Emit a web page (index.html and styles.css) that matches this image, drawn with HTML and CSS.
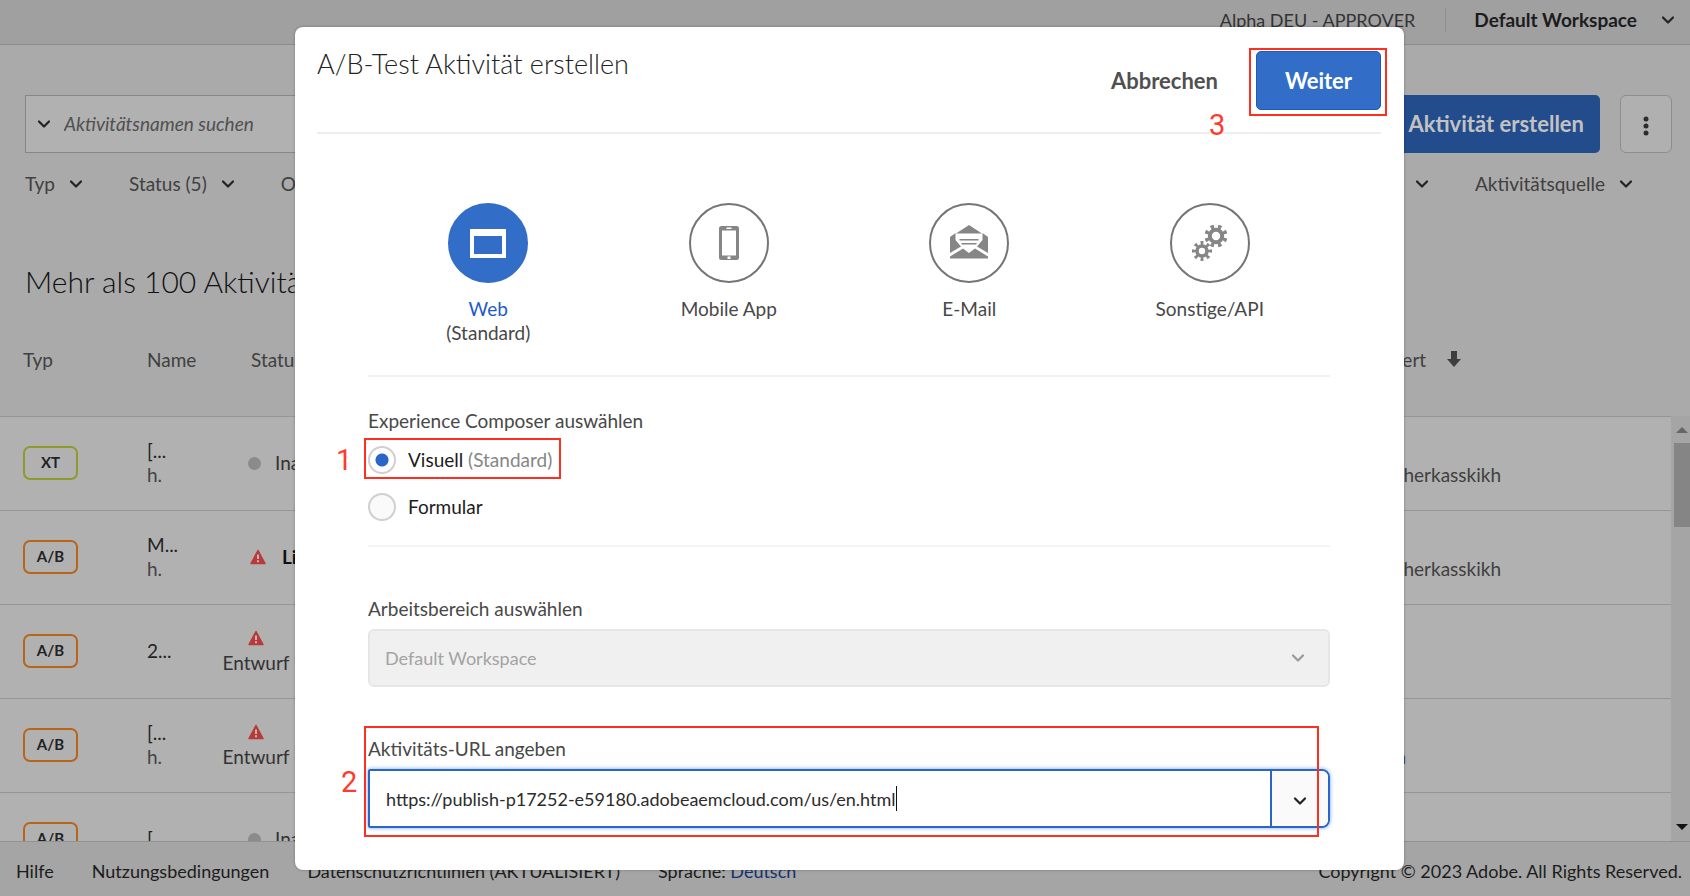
FILE: index.html
```
<!DOCTYPE html>
<html lang="de">
<head>
<meta charset="utf-8">
<title>A/B-Test Aktivität erstellen</title>
<link rel="stylesheet" href="styles.css">
</head>
<body>
<svg width="0" height="0" class="defs" aria-hidden="true">
  <symbol id="chevron" viewBox="0 0 14 10"><path d="M2 2.500l5 5 5-5" fill="none" stroke="currentColor" stroke-width="2.200" stroke-linecap="round" stroke-linejoin="round"/></symbol>
  <symbol id="warning" viewBox="0 0 16 16"><path d="M8 1.500L15 14.500H1z" fill="#b83a3a" stroke="#b83a3a" stroke-width="1.500" stroke-linejoin="round"/><path d="M8 5.500v4.500M8 11.300v1.900" stroke="#c4b4b4" stroke-width="2"/></symbol>
</svg>
<div class="page">
  <header class="topbar">
    <span class="user">Alpha DEU - APPROVER</span>
    <button class="workspace">Default Workspace <svg class="chev"><use href="#chevron"/></svg></button>
  </header>
  <main class="content">
    <div class="toolbar">
      <label class="search"><svg class="chev"><use href="#chevron"/></svg><input type="text" placeholder="Aktivitätsnamen suchen" aria-label="Aktivitätsnamen suchen"></label>
      <button class="create">Aktivität erstellen</button>
      <button class="more" aria-label="Mehr"><svg width="6" height="20" viewBox="0 0 6 20"><g fill="#2c2c2c"><circle cx="3" cy="3" r="2.500"/><circle cx="3" cy="10" r="2.500"/><circle cx="3" cy="17" r="2.500"/></g></svg></button>
    </div>
    <div class="filters">
      <button>Typ <svg class="chev"><use href="#chevron"/></svg></button>
      <button>Status (5) <svg class="chev"><use href="#chevron"/></svg></button>
      <button>Or</button>
      <button class="push" aria-label="Filter"><svg class="chev"><use href="#chevron"/></svg></button>
      <button>Aktivitätsquelle <svg class="chev"><use href="#chevron"/></svg></button>
    </div>
    <h1>Mehr als 100 Aktivitäten</h1>
    <div class="list">
      <table>
        <colgroup><col class="c-type"><col class="c-name"><col class="c-status"><col></colgroup>
        <thead><tr><th>Typ</th><th>Name</th><th class="status-head">Status</th><th class="updated sorted">aktualisiert <svg class="arrow" viewBox="0 0 14 16"><path d="M4 0h6v8h4l-7 8-7-8h4z" fill="#3e3e3e"/></svg></th></tr></thead>
        <tbody>
          <tr><td><span class="chip xt">XT</span></td><td>[...<br><span class="sub">h.</span></td><td><span class="status idle"><i class="dot"></i>Inaktiv</span></td><td class="updated by"><br>Cherkasskikh</td></tr>
          <tr><td><span class="chip">A/B</span></td><td>M...<br><span class="sub">h.</span></td><td><span class="status live"><svg class="warn"><use href="#warning"/></svg>Live</span></td><td class="updated by"><br>Cherkasskikh</td></tr>
          <tr><td><span class="chip">A/B</span></td><td>2...</td><td><span class="status draft"><svg class="warn"><use href="#warning"/></svg>Entwurf</span></td><td></td></tr>
          <tr><td><span class="chip">A/B</span></td><td>[...<br><span class="sub">h.</span></td><td><span class="status draft"><svg class="warn"><use href="#warning"/></svg>Entwurf</span></td><td class="updated short"><br>n</td></tr>
          <tr><td><span class="chip">A/B</span></td><td>[...</td><td><span class="status idle"><i class="dot"></i>Inaktiv</span></td><td></td></tr>
        </tbody>
      </table>
      <div class="scrollbar">
        <svg width="12" height="6" viewBox="0 0 12 6"><path d="M0 6l6-6 6 6z" fill="#666"/></svg>
        <div class="thumb"></div>
        <svg width="12" height="6" viewBox="0 0 12 6"><path d="M0 0l6 6 6-6z" fill="#111"/></svg>
      </div>
    </div>
  </main>
  <footer class="footer">
    <a href="#">Hilfe</a>
    <a href="#">Nutzungsbedingungen</a>
    <a href="#">Datenschutzrichtlinien (AKTUALISIERT)</a>
    <span>Sprache: <a href="#" class="lang">Deutsch</a></span>
    <span class="copy">Copyright © 2023 Adobe. All Rights Reserved.</span>
  </footer>
</div>

<section class="modal" role="dialog" aria-labelledby="dlg">
  <header class="modal-head">
    <h2 id="dlg">A/B-Test Aktivität erstellen</h2>
    <button class="cancel">Abbrechen</button>
    <div class="marked next-wrap">
      <button class="next">Weiter</button>
      <span class="mark mark-next"></span><span class="num num-next">3</span>
    </div>
  </header>
  <div class="modal-body">
    <div class="channels">
      <button class="channel active"><span class="disc"><svg width="36" height="29" viewBox="0 0 36 29"><path d="M0 0h36v29H0zM4 7v18h28V7z" fill="#fff" fill-rule="evenodd"/></svg></span><span class="name">Web</span><span>(Standard)</span></button>
      <button class="channel"><span class="disc"><svg width="20" height="34" viewBox="0 0 20 34"><path d="M2.500 0h15A2.500 2.500 0 0120 2.500v29a2.500 2.500 0 01-2.500 2.500h-15A2.500 2.500 0 010 31.500v-29A2.500 2.500 0 012.500 0zM3 4.500v25h14v-25zM7.500 1.500v1.500h5V1.500zM8.500 30.500v2.500h3v-2.500z" fill="#868686" fill-rule="evenodd"/></svg></span><span>Mobile App</span></button>
      <button class="channel"><span class="disc"><svg width="40" height="40" viewBox="0 0 40 40"><g fill="#868686"><path d="M20 2l13 8.500H7z"/><path d="M1 14l5.500-4v7l5.500 6.500L1 30z"/><path d="M39 14l-5.500-4v7L28 23.500 39 30z"/><path d="M1 35.500V33.500l13-8 6 4.500 6-4.500 13 8v2z"/><path d="M10.500 16h19v1.500h-19zM12.500 20h15v1.500h-15z"/></g></svg></span><span>E-Mail</span></button>
      <button class="channel"><span class="disc"><svg width="40" height="40" viewBox="0 0 40 40" fill="none" stroke="#868686"><circle cx="26" cy="13" r="6.200" stroke-width="4"/><circle cx="26" cy="13" r="9.500" stroke-width="4" pathLength="16" stroke-dasharray=".9 1.100" stroke-dashoffset="-.55"/><circle cx="12" cy="28" r="5" stroke-width="3.600"/><circle cx="12" cy="28" r="8" stroke-width="4" pathLength="16" stroke-dasharray=".9 1.100" stroke-dashoffset=".45"/></svg></span><span>Sonstige/API</span></button>
    </div>
    <fieldset class="composer">
      <legend>Experience Composer auswählen</legend>
      <div class="marked pick">
        <label class="radio"><input type="radio" name="composer" checked><span>Visuell <span class="hint">(Standard)</span></span></label>
        <span class="mark mark-pick"></span><span class="num num-pick">1</span>
      </div>
      <label class="radio"><input type="radio" name="composer"><span>Formular</span></label>
    </fieldset>
    <div class="field">
      <label for="ws">Arbeitsbereich auswählen</label>
      <div class="select"><select id="ws" disabled><option>Default Workspace</option></select><svg class="chev"><use href="#chevron"/></svg></div>
    </div>
    <div class="field marked url">
      <label for="url">Aktivitäts-URL angeben</label>
      <div class="combo"><input id="url" type="text" value="https://publish-p17252-e59180.adobeaemcloud.com/us/en.html"><span class="caret"></span><button aria-label="Vorschläge"><svg class="chev"><use href="#chevron"/></svg></button></div>
      <span class="mark mark-url"></span><span class="num num-url">2</span>
    </div>
  </div>
</section>
</body>
</html>
```

FILE: styles.css
```
* { box-sizing: border-box; }
body { margin: 0; font: 19px/24px Lato, "Noto Sans", sans-serif; color: #333; background: #aaa; }
button, input, select { font: inherit; color: inherit; margin: 0; padding: 0; border: 0; background: none; }
a { color: inherit; text-decoration: none; }
h1, h2 { margin: 0; font-weight: 300; }
.defs { position: absolute; }
.chev { width: 14px; height: 10px; flex: none; color: #222; }

.page { display: flex; flex-direction: column; height: 100vh; overflow: hidden; }
.topbar { display: flex; justify-content: flex-end; align-items: flex-start; height: 45px; padding: 8px 15px 0 0; background: #a0a0a0; border-bottom: 1px solid #8c8c8c; flex: none; }
.user { padding-right: 30px; border-right: 1px solid #8f8f8f; font-size: 18px; }
.workspace { display: flex; align-items: center; gap: 24px; padding-left: 28px; font-weight: 700; color: #1c1c1c; }

.content { display: flex; flex-direction: column; flex: 1; min-height: 0; }
.toolbar { display: flex; gap: 20px; padding: 50px 18px 0 25px; }
.search { display: flex; align-items: center; gap: 13px; flex: 1; height: 58px; padding: 0 11px; border: 1px solid #878787; background: #b1b1b1; }
.search input { flex: 1; font-style: italic; }
.search input::placeholder { color: #505050; opacity: 1; }
.create { height: 58px; padding: 0 16px 0 40px; border-radius: 5px; background: #234c8c; color: #c2c2c2; font-size: 22px; font-weight: 700; }
.more { width: 52px; height: 58px; border: 1px solid #8d8d8d; border-radius: 6px; background: #b0b0b0; }
.more svg { vertical-align: middle; }
.filters { display: flex; gap: 46px; padding: 19px 57px 0 25px; color: #404040; }
.filters button { display: flex; align-items: center; gap: 14px; }
.filters .push { margin-left: auto; }
h1 { padding: 62px 25px 0; font-size: 30px; line-height: 46px; color: #111; }

.list { display: flex; flex: 1; min-height: 0; margin-top: 26px; overflow: hidden; position: relative; }
table { flex: 1; border-collapse: collapse; table-layout: fixed; }
.c-type { width: 147px; }
.c-name { width: 75px; }
.c-status { width: 140px; }
thead tr { height: 86px; background: #aaa; }
th { padding: 0 0 26px; text-align: left; font-weight: 400; color: #404040; }
td { padding: 0; color: #222; }
th:first-child, td:first-child { padding-left: 23px; }
.status-head { padding-left: 29px; }
tbody tr { height: 94px; background: #b1b1b1; border-top: 1px solid #969696; }
.sub { color: #444; }
.updated { text-align: right; white-space: nowrap; color: #404040; }
.sorted { padding-right: 210px; }
.arrow { width: 14px; height: 16px; margin-left: 16px; }
.by { padding-right: 170px; }
.short { padding-right: 265px; }
.chip { display: block; width: 55px; height: 34px; border: 2px solid #b8651c; border-radius: 7px; font-size: 15px; line-height: 29px; font-weight: 700; text-align: center; }
.chip.xt { border-color: #8f9a2c; }
.status { display: flex; align-items: center; color: #333; }
.idle { padding-left: 26px; gap: 14px; }
.dot { width: 13px; height: 13px; border-radius: 50%; background: #8b8b8b; }
.live { padding-left: 28px; gap: 16px; font-weight: 700; color: #111; }
.warn { width: 16px; height: 16px; flex: none; }
.draft { flex-direction: column; width: 68px; gap: 5px; padding-top: 3px; }
.scrollbar { display: flex; flex-direction: column; align-items: center; width: 19px; margin-top: 86px; padding: 11px 0 11px 3px; background: #a5a5a5; }
.thumb { width: 100%; height: 84px; margin: 10px 0 auto; background: #858585; }

.footer { display: flex; align-items: center; height: 55px; padding: 4px 8px 0 16px; gap: 38px; border-top: 1px solid #929292; background: #a5a5a5; color: #1c1c1c; font-size: 18px; flex: none; }
.lang { color: #15316e; }
.copy { margin-left: auto; }

.modal { position: absolute; top: 27px; left: 295px; right: 286px; padding-bottom: 42px; border-radius: 8px; background: #fff; box-shadow: 0 0 3px rgba(0, 0, 0, .3); color: #484848; }
.modal-head { display: flex; align-items: flex-start; margin: 0 23px 0 22px; height: 107px; border-bottom: 2px solid #eee; }
h2 { margin-right: auto; padding-top: 19px; font-size: 27px; line-height: 36px; color: #222; }
.cancel { margin: 24px 38px 0 0; height: 60px; font-size: 22px; font-weight: 700; color: #505050; }
.marked { position: relative; }
.next-wrap { margin-top: 24px; }
.next { width: 125px; height: 59px; border: 1px solid #1f5bbd; border-radius: 5px; background: #326ec8; color: #fff; font-size: 22px; font-weight: 700; }
.modal-body { padding: 69px 74px 0 73px; }
.mark { position: absolute; border: 2px solid #ff2f20; pointer-events: none; }
.num { position: absolute; font: 29px/32px Roboto, sans-serif; color: #ff3a30; }
.mark-next { inset: -3px -6px -6px -7px; }
.num-next { left: -47px; top: 58px; }

.channels { display: grid; grid-template-columns: repeat(4, 1fr); height: 174px; border-bottom: 2px solid #f2f2f2; }
.channel { display: flex; flex-direction: column; align-items: center; }
.disc { display: flex; align-items: center; justify-content: center; width: 80px; height: 80px; margin-bottom: 14px; border: 2px solid #757575; border-radius: 50%; }
.active .disc { background: #326ec8; border-color: #326ec8; }
.active .name { color: #1f5bcc; }

.composer { margin: 0; padding: 32px 0 0; border: 0; border-bottom: 2px solid #f4f4f4; height: 170px; }
.composer legend { float: left; width: 100%; padding: 0; margin-bottom: 13px; }
.pick { clear: both; margin-bottom: 19px; }
.radio { display: flex; align-items: center; gap: 12px; height: 28px; clear: both; color: #1c1c1c; }
.hint { color: #868686; }
.radio input { appearance: none; width: 28px; height: 28px; border: 2px solid #d0d0d0; border-radius: 50%; background: #fafafa; }
.radio input:checked { background: radial-gradient(circle, #2a66c8 6px, #fff 7px); }
.mark-pick { left: -4px; top: -8px; width: 197px; height: 41px; }
.num-pick { left: -32px; top: -2px; }

.field { padding-top: 50px; }
.field label { display: block; margin-bottom: 8px; }
.select { display: flex; align-items: center; height: 58px; padding: 0 23px 0 15px; border: 2px solid #e6e6e6; border-radius: 6px; background: #f0f0f0; font-size: 18px; }
.select select { appearance: none; flex: 1; opacity: 1; color: #a3a3a3; }
.select .chev { color: #999; }
.combo { position: relative; display: flex; height: 59px; border: 2px solid #2a66c8; border-radius: 2px 8px 8px 2px; box-shadow: 0 0 4px #7aa4ea; font-size: 18px; }
.combo input { flex: 1; padding-left: 16px; outline: 0; color: #2c2c2c; border-right: 2px solid #2a66c8; }
.combo button { width: 56px; border-radius: 0 6px 6px 0; background: #fafafa; }
.caret { position: absolute; left: 526px; top: 15px; width: 1px; height: 25px; background: #111; }
.mark-url { left: -4px; right: 11px; top: 39px; bottom: -9px; }
.num-url { left: -27px; top: 79px; }
```
